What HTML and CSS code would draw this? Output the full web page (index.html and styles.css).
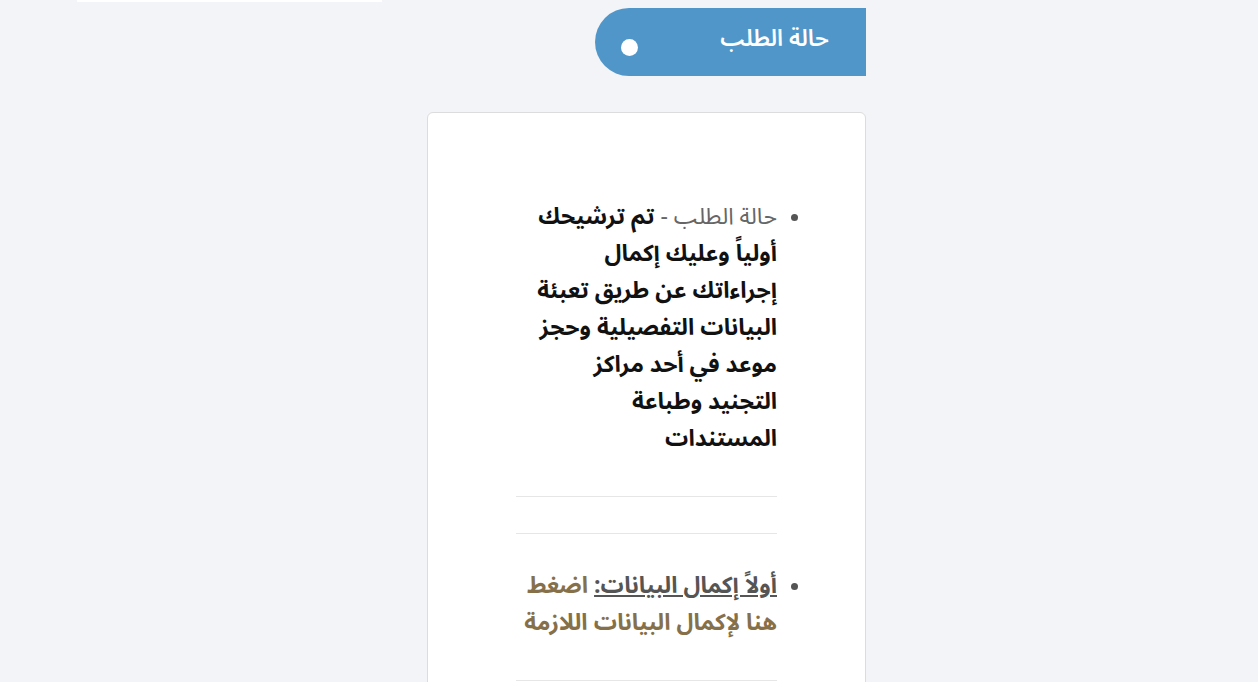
FILE: index.html
```html
<!DOCTYPE html>
<html lang="ar" dir="rtl">
<head>
    <meta charset="UTF-8">
    <meta name="viewport" content="width=device-width, initial-scale=1.0">
    <title>حالة الطلب</title>
    <link rel="stylesheet" href="styles.css">
</head>
<body>
    <div class="layout">
        <div class="main">
            <div class="status-tab">
                <span class="status-title">حالة الطلب</span>
                <span class="status-dot"></span>
            </div>
            <div class="status-card">
                <ul class="status-list">
                    <li>
                        <span class="label">حالة الطلب -</span>
                        <strong class="state">تم ترشيحك<br>أولياً وعليك إكمال<br>إجراءاتك عن طريق تعبئة<br>البيانات التفصيلية وحجز<br>موعد في أحد مراكز<br>التجنيد وطباعة<br>المستندات</strong>
                    </li>
                </ul>
                <hr class="divider first">
                <hr class="divider">
                <ul class="status-list step">
                    <li>
                        <a href="#" class="step-title">أولاً إكمال البيانات:</a>
                        <a href="#" class="step-link">اضغط<br>هنا لإكمال البيانات اللازمة</a>
                    </li>
                </ul>
                <hr class="divider first">
            </div>
        </div>
        <div class="sidebar">
            <div class="sidebar-card"></div>
        </div>
    </div>
</body>
</html>
```

FILE: styles.css
```css
body {
    margin: 0;
    background-color: #f3f4f8;
    font-family: "Noto Sans Arabic", "DejaVu Sans", sans-serif;
    color: #111;
}
.layout {
    display: flex;
    align-items: flex-start;
    padding-right: 392px;
    gap: 45px;
}
.main {
    width: 439px;
    padding-top: 8px;
}
.sidebar {
    width: 305px;
}
.sidebar-card {
    height: 2px;
    background: #fff;
}
.status-tab {
    display: flex;
    justify-content: space-between;
    align-items: flex-start;
    width: 271px;
    height: 68px;
    box-sizing: border-box;
    padding: 14px 37px 0 26px;
    background-color: #5096c8;
    border-radius: 34px 0 0 34px;
    color: #fff;
}
.status-title {
    font-size: 23px;
    font-weight: 600;
    line-height: 34px;
}
.status-dot {
    width: 17px;
    height: 17px;
    margin-top: 17px;
    border-radius: 50%;
    background: #fff;
}
.status-card {
    margin-top: 36px;
    min-height: 600px;
    padding: 85px 88px 0;
    background: #fff;
    border: 1.5px solid #dcdcdc;
    border-radius: 6px;
}
.status-list {
    margin: 0;
    padding: 0;
    font-size: 23px;
    line-height: 37px;
}
.status-list li {
    list-style: disc;
    white-space: nowrap;
}
.status-list li::marker {
    color: #555;
    font-size: 16px;
}
.label {
    color: #666;
}
.state {
    font-weight: bold;
    color: #111;
}
.divider {
    margin: 39px 0 0;
    border: 0;
    border-top: 1px solid #e6e6e6;
}
.divider + .divider {
    margin-top: 36px;
}
.step {
    margin-top: 33px;
}
.step-title {
    color: #555;
    font-weight: bold;
    text-decoration: underline;
}
.step-link {
    color: #86704a;
    font-weight: bold;
    text-decoration: none;
}
```
